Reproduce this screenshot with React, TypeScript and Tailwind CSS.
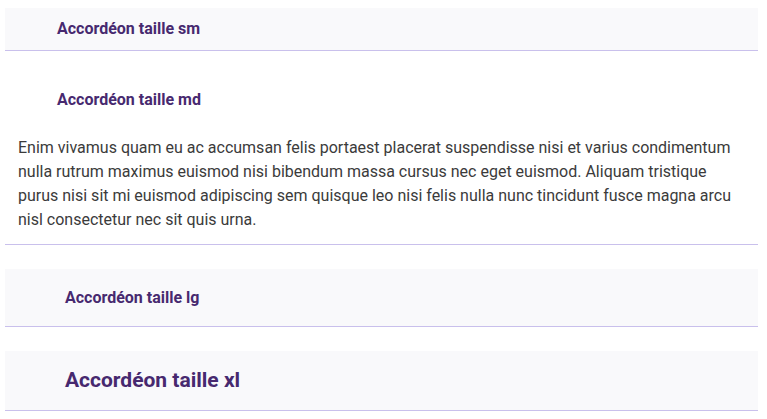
import React from 'react';

const body =
    'Enim vivamus quam eu ac accumsan felis portaest placerat suspendisse nisi et varius condimentum nulla rutrum maximus euismod nisi bibendum massa cursus nec eget euismod. Aliquam tristique purus nisi sit mi euismod adipiscing sem quisque leo nisi felis nulla nunc tincidunt fusce magna arcu nisl consectetur nec sit quis urna.';

export default function App() {
    return (
        <div className="bg-white px-[5px] pt-2 pr-[9px] font-['Roboto',sans-serif] flex flex-col gap-6">
            {/* taille sm */}
            <div className="border-b border-[#c9c0ec]">
                <button className="w-full h-[42px] bg-[#f9f9fb] pl-[52px] text-left text-[16px] font-bold text-[#47296f]">
                    Accordéon taille sm
                </button>
            </div>

            {/* taille md (ouvert) */}
            <div className="border-b border-[#c9c0ec]">
                <button className="w-full h-[50px] bg-white pl-[52px] text-left text-[16px] font-bold text-[#47296f]">
                    Accordéon taille md
                </button>
                <div className="pl-[13px] pr-[13px] pt-[11px] pb-[12px] text-[16px] leading-6 text-[#3b3b3b]">{body}</div>
            </div>

            {/* taille lg */}
            <div className="border-b border-[#c9c0ec]">
                <button className="w-full h-[57px] bg-[#f9f9fb] pl-[60px] text-left text-[16px] font-bold text-[#47296f]">
                    Accordéon taille lg
                </button>
            </div>

            {/* taille xl */}
            <div className="border-b border-[#c9c0ec]">
                <button className="w-full h-[59px] bg-[#f9f9fb] pl-[60px] text-left text-[21px] font-bold text-[#47296f]">
                    Accordéon taille xl
                </button>
            </div>
        </div>
    );
}
